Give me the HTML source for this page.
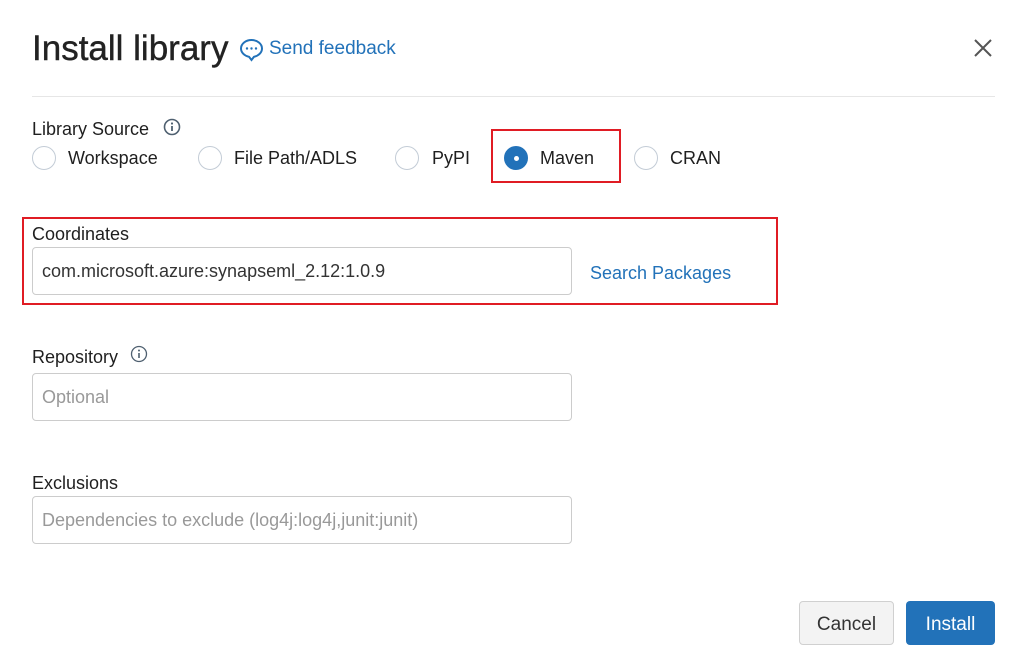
<!DOCTYPE html>
<html><head><style>
*{box-sizing:border-box;margin:0;padding:0}
body{width:1029px;height:664px;background:#fff;font-family:"Liberation Sans",sans-serif;color:#222;position:relative;overflow:hidden}
.a{position:absolute;white-space:nowrap}
.lbl{font-size:18px;color:#1f1f1f}
.radio{position:absolute;width:24px;height:24px;border:1px solid #c3ccd6;border-radius:50%}
.inp{position:absolute;left:32px;width:540px;height:48px;border:1px solid #ccc;border-radius:4px;font-size:18px;padding:13px 9px;color:#999}
.red{position:absolute;border:2px solid #e01c24}
.link{color:#2272b9}
</style></head><body>
<div class="a" style="left:32px;top:29px;font-size:35px;color:#222;-webkit-text-stroke:0.4px #222">Install library</div>
<svg class="a" style="left:239px;top:38px" width="25" height="24" viewBox="0 0 25 24"><path d="M12.5 2C6.7 2 2 5.8 2 10.5c0 4.1 3.5 7.4 8 8.3L12.5 22l2.5-3.2c4.5-.9 8-4.2 8-8.3C23 5.8 18.3 2 12.5 2z" fill="none" stroke="#2272b9" stroke-width="2"/><circle cx="8" cy="10.5" r="1.2" fill="#2272b9"/><circle cx="12.5" cy="10.5" r="1.2" fill="#2272b9"/><circle cx="17" cy="10.5" r="1.2" fill="#2272b9"/></svg>
<div class="a link" style="left:269px;top:38px;font-size:19px">Send feedback</div>
<svg class="a" style="left:973px;top:38px" width="20" height="20"><path d="M2 2L18 18M18 2L2 18" stroke="#555" stroke-width="2"/></svg>
<div class="a" style="left:32px;top:96px;width:963px;height:1px;background:#e6e6e6"></div>
<div class="a lbl" style="left:32px;top:119px">Library Source</div>
<svg class="a" style="left:163px;top:118px" width="18" height="18"><circle cx="9" cy="9" r="7.5" fill="none" stroke="#4f6070" stroke-width="1.6"/><rect x="8.1" y="8" width="1.8" height="5" fill="#4f6070"/><circle cx="9" cy="5.5" r="1.1" fill="#4f6070"/></svg>
<div class="radio" style="left:32px;top:146px"></div><div class="a lbl" style="left:68px;top:148px">Workspace</div>
<div class="radio" style="left:198px;top:146px"></div><div class="a lbl" style="left:234px;top:148px">File Path/ADLS</div>
<div class="radio" style="left:395px;top:146px"></div><div class="a lbl" style="left:432px;top:148px">PyPI</div>
<div class="radio" style="left:504px;top:146px;background:#2272b9;border-color:#2272b9"><div style="position:absolute;left:8.5px;top:8.5px;width:5px;height:5px;border-radius:50%;background:#fff"></div></div><div class="a lbl" style="left:540px;top:148px">Maven</div>
<div class="radio" style="left:634px;top:146px"></div><div class="a lbl" style="left:670px;top:148px">CRAN</div>
<div class="red" style="left:491px;top:129px;width:130px;height:54px"></div>
<div class="red" style="left:22px;top:217px;width:756px;height:88px"></div>
<div class="a lbl" style="left:32px;top:224px">Coordinates</div>
<div class="inp" style="top:247px;color:#333">com.microsoft.azure:synapseml_2.12:1.0.9</div>
<div class="a link" style="left:590px;top:263px;font-size:18px">Search Packages</div>
<div class="a lbl" style="left:32px;top:347px">Repository</div>
<svg class="a" style="left:130px;top:345px" width="18" height="18"><circle cx="9" cy="9" r="7.5" fill="none" stroke="#4f6070" stroke-width="1.3"/><rect x="8.2" y="8" width="1.6" height="5" fill="#4f6070"/><circle cx="9" cy="5.5" r="1" fill="#4f6070"/></svg>
<div class="inp" style="top:373px">Optional</div>
<div class="a lbl" style="left:32px;top:473px">Exclusions</div>
<div class="inp" style="top:496px">Dependencies to exclude (log4j:log4j,junit:junit)</div>
<div class="a" style="left:799px;top:601px;width:95px;height:44px;background:#f3f3f3;border:1px solid #d0d0d0;border-radius:4px;font-size:19px;text-align:center;line-height:46px;color:#333">Cancel</div>
<div class="a" style="left:906px;top:601px;width:89px;height:44px;background:#2272b9;border-radius:4px;font-size:19px;text-align:center;line-height:47px;color:#fff">Install</div>
</body></html>
